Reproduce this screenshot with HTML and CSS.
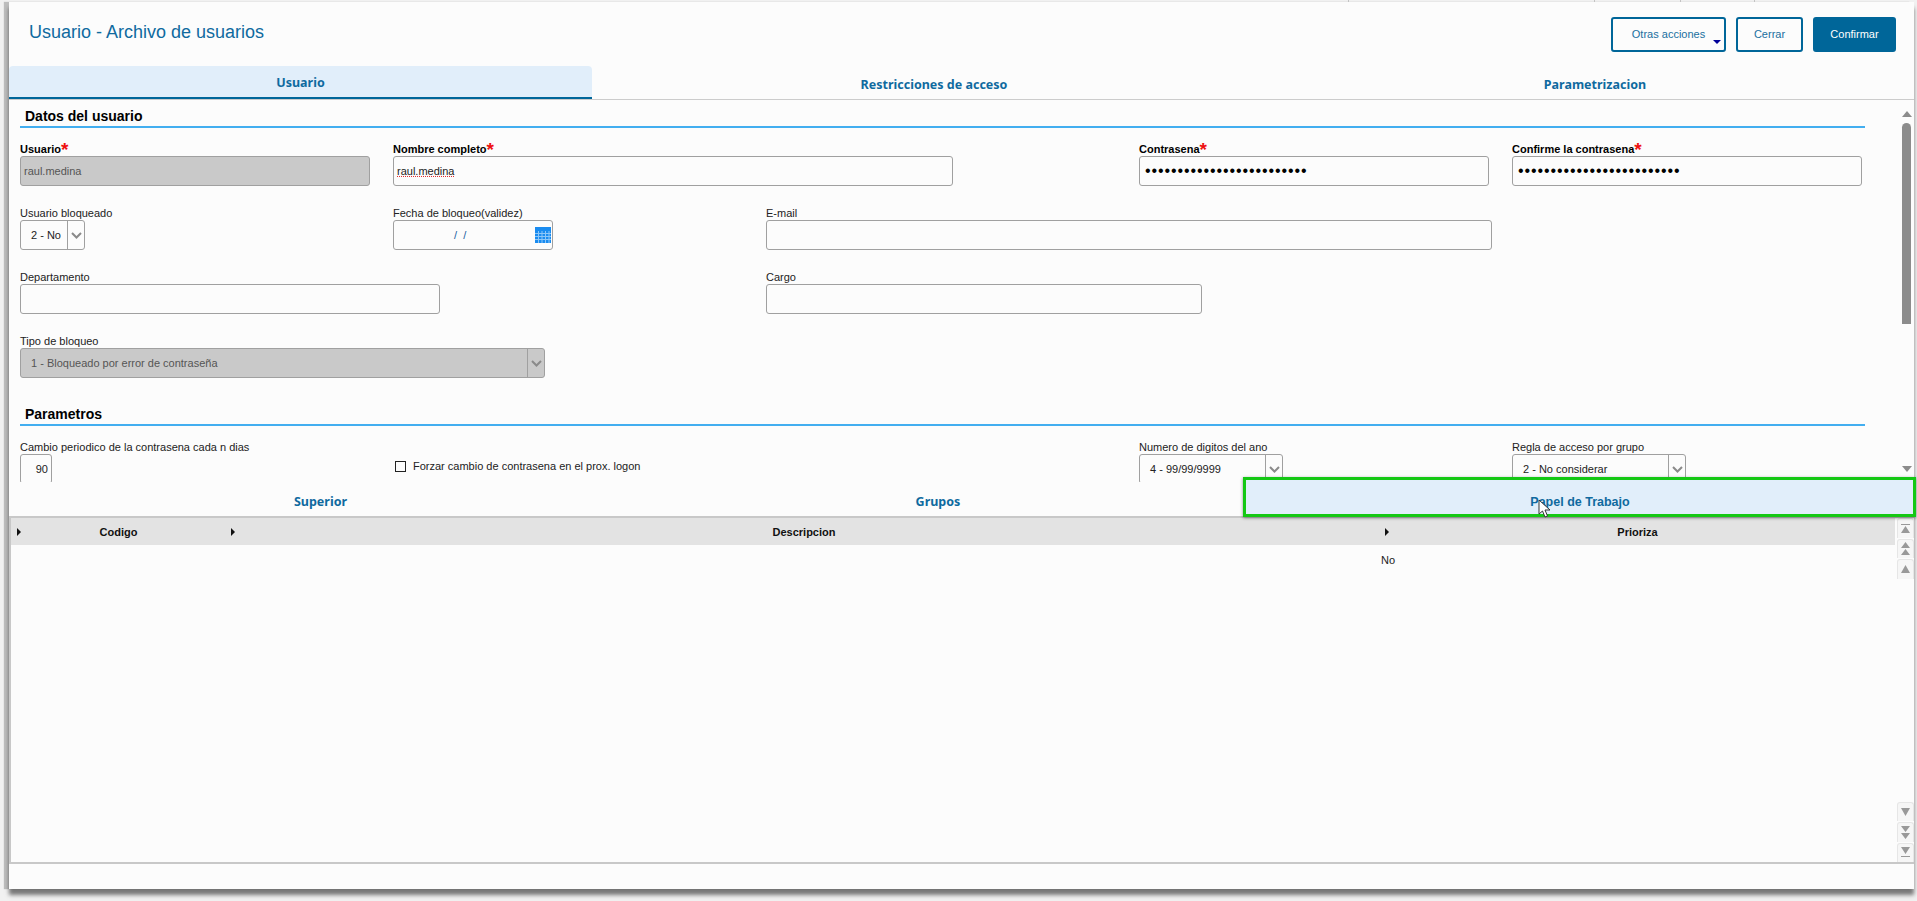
FILE: index.html
```html
<!DOCTYPE html>
<html lang="en">
<head>
    <meta charset="UTF-8">
    <title>Usuario - Archivo de usuarios</title>
    <link rel="stylesheet" href="styles.css">
</head>
<body>

<div class="window">
    <header class="window-header">
        <h1>Usuario - Archivo de usuarios</h1>
        <div class="actions">
            <button type="button" class="btn btn-more">Otras acciones<span class="caret"></span></button>
            <button type="button" class="btn btn-close">Cerrar</button>
            <button type="button" class="btn btn-primary">Confirmar</button>
        </div>
    </header>

    <nav class="tabs top-tabs">
        <div class="tab active">Usuario</div>
        <div class="tab">Restricciones de acceso</div>
        <div class="tab">Parametrizacion</div>
    </nav>

    <div class="form-pane">
        <div class="form-scroll">
            <h3 class="section-title">Datos del usuario</h3>
            <div class="field-grid">
                <div class="form-group">
                    <label class="required">Usuario<span class="star">*</span></label>
                    <input class="w-350 disabled" type="text" value="raul.medina" disabled>
                </div>
                <div class="form-group span-2">
                    <label class="required">Nombre completo<span class="star">*</span></label>
                    <input class="w-560 misspelled" type="text" value="raul.medina">
                </div>
                <div class="form-group">
                    <label class="required">Contrasena<span class="star">*</span></label>
                    <input class="w-350 secret" type="password" value="1234567890123456789012345">
                </div>
                <div class="form-group">
                    <label class="required">Confirme la contrasena<span class="star">*</span></label>
                    <input class="w-350 secret" type="password" value="1234567890123456789012345">
                </div>

                <div class="form-group">
                    <label>Usuario bloqueado</label>
                    <div class="select w-65"><span>2 - No</span><i class="chevron"><svg width="11" height="7" viewBox="0 0 11 7"><path d="M1 1l4.5 4.5L10 1" fill="none" stroke="#8a8a8a" stroke-width="2"/></svg></i></div>
                </div>
                <div class="form-group">
                    <label>Fecha de bloqueo(validez)</label>
                    <div class="date-input w-160">
                        <span class="date-mask">/ &nbsp;/</span>
                        <svg class="calendar" width="16" height="16" viewBox="0 0 16 16">
                            <rect width="16" height="16" fill="#1a8cf0"/>
                            <path d="M3.5 4v12M7 4v12M10.5 4v12M14 4v12M0 6.5h16M0 9.5h16M0 12.5h16" stroke="#8cc6f8" stroke-width="1"/>
                        </svg>
                    </div>
                </div>
                <div class="form-group span-3">
                    <label>E-mail</label>
                    <input class="w-726" type="text">
                </div>

                <div class="form-group span-2">
                    <label>Departamento</label>
                    <input class="w-420" type="text">
                </div>
                <div class="form-group span-3">
                    <label>Cargo</label>
                    <input class="w-436" type="text">
                </div>

                <div class="form-group span-5">
                    <label>Tipo de bloqueo</label>
                    <div class="select disabled w-525"><span>1 - Bloqueado por error de contraseña</span><i class="chevron"><svg width="11" height="7" viewBox="0 0 11 7"><path d="M1 1l4.5 4.5L10 1" fill="none" stroke="#8a8a8a" stroke-width="2"/></svg></i></div>
                </div>
            </div>

            <h3 class="section-title second">Parametros</h3>
            <div class="field-grid">
                <div class="form-group">
                    <label>Cambio periodico de la contrasena cada n dias</label>
                    <input class="w-32 number" type="text" value="90">
                </div>
                <div class="check-group span-2">
                    <span class="checkbox"></span>
                    <span>Forzar cambio de contrasena en el prox. logon</span>
                </div>
                <div class="form-group">
                    <label>Numero de digitos del ano</label>
                    <div class="select w-144"><span>4 - 99/99/9999</span><i class="chevron"><svg width="11" height="7" viewBox="0 0 11 7"><path d="M1 1l4.5 4.5L10 1" fill="none" stroke="#8a8a8a" stroke-width="2"/></svg></i></div>
                </div>
                <div class="form-group">
                    <label>Regla de acceso por grupo</label>
                    <div class="select w-174"><span>2 - No considerar</span><i class="chevron"><svg width="11" height="7" viewBox="0 0 11 7"><path d="M1 1l4.5 4.5L10 1" fill="none" stroke="#8a8a8a" stroke-width="2"/></svg></i></div>
                </div>
            </div>
        </div>
        <div class="scrollbar">
            <span class="arrow-up"></span>
            <span class="thumb"></span>
            <span class="arrow-down"></span>
        </div>
    </div>

    <nav class="tabs bottom-tabs">
        <div class="tab">Superior</div>
        <div class="tab">Grupos</div>
        <div class="tab highlighted">
            <div class="highlight-box"></div>
            <span>Papel de Trabajo</span>
            <svg class="cursor" width="13" height="19" viewBox="0 0 13 19">
                <path d="M1 1v14l3.5-3 2.5 6 2.5-1-2.5-6H12z" fill="#fff" stroke="#333" stroke-width="1"/>
            </svg>
        </div>
    </nav>

    <div class="table-pane">
        <div class="table">
            <div class="table-row table-head">
                <div class="cell"><i class="sort"></i><span>Codigo</span></div>
                <div class="cell"><i class="sort"></i><span>Descripcion</span></div>
                <div class="cell"><i class="sort"></i><span>Prioriza</span></div>
            </div>
            <div class="table-row table-body">
                <div></div>
                <div></div>
                <div class="plain-cell">No</div>
            </div>
        </div>
        <div class="pager">
            <div class="pager-stack">
                <button type="button" class="pager-btn"><svg width="11" height="11" viewBox="0 0 11 11"><path d="M1 1h9v1H1zM5.500 3L10 10H1z" fill="#999"/></svg></button>
                <button type="button" class="pager-btn"><svg width="11" height="13" viewBox="0 0 11 13"><path d="M5.500 0L10 6H1zM5.500 7l4.500 6H1z" fill="#999"/></svg></button>
                <button type="button" class="pager-btn"><svg width="11" height="8" viewBox="0 0 11 8"><path d="M5.500 0L10 8H1z" fill="#999"/></svg></button>
            </div>
            <div class="pager-stack">
                <button type="button" class="pager-btn"><svg width="11" height="8" viewBox="0 0 11 8"><path d="M1 0h9L5.500 8z" fill="#999"/></svg></button>
                <button type="button" class="pager-btn"><svg width="11" height="13" viewBox="0 0 11 13"><path d="M1 0h9L5.500 6zM1 7h9l-4.500 6z" fill="#999"/></svg></button>
                <button type="button" class="pager-btn"><svg width="11" height="11" viewBox="0 0 11 11"><path d="M1 0h9L5.500 7zM1 9h9v1H1z" fill="#999"/></svg></button>
            </div>
        </div>
    </div>

    <footer class="window-footer"></footer>
</div>

</body>
</html>
```

FILE: styles.css
```css
* {
    box-sizing: border-box;
    margin: 0;
    padding: 0;
    font-family: "Liberation Sans", Arial, sans-serif;
}

html, body {
    height: 100%;
    overflow: hidden;
}

body {
    background-color: #f1f1f1;
    color: #222;
    font-size: 11px;
    /* edges of the window behind this one */
    background-image: linear-gradient(#c4c4c4, #c4c4c4), linear-gradient(#c4c4c4, #c4c4c4), linear-gradient(#c4c4c4, #c4c4c4), linear-gradient(#c4c4c4, #c4c4c4);
    background-size: 1px 2px;
    background-repeat: no-repeat;
    background-position: 1348px 0, 1594px 0, 1680px 0, 1754px 0;
}

.window {
    display: flex;
    flex-direction: column;
    width: 1905px;
    height: 887px;
    margin: 2px 0 0 9px;
    background-color: #fcfcfc;
    box-shadow: 0 6px 4px rgba(0, 0, 0, 0.5), -5px 0 1px #bdbdbd;
}

/* header */
.window-header {
    display: flex;
    justify-content: space-between;
    align-items: center;
    height: 64px;
    padding: 0 18px 0 20px;
}

.window-header h1 {
    font-size: 18px;
    font-weight: normal;
    color: #0f6a9f;
    margin-bottom: 4px;
}

.actions {
    display: flex;
    gap: 10px;
}

.btn {
    height: 35px;
    border: 2px solid #006699;
    border-radius: 3px;
    background-color: #fcfcfc;
    color: #1a6f9f;
    font-size: 11px;
}

.btn-more {
    position: relative;
    width: 115px;
}

.btn-close {
    width: 67px;
}

.btn-primary {
    width: 83px;
    background-color: #006699;
    color: #fff;
}

.caret {
    position: absolute;
    right: 3px;
    bottom: 6px;
    border-left: 4px solid transparent;
    border-right: 4px solid transparent;
    border-top: 4px solid #000099;
}

/* tabs */
.tabs {
    display: grid;
    flex-shrink: 0;
}

.tab {
    display: flex;
    justify-content: center;
    align-items: center;
    font-family: "Noto Sans", Arial, sans-serif;
    font-size: 12.5px;
    font-weight: 700;
    color: #0f6a9f;
}

.top-tabs {
    grid-template-columns: 583px 684px 1fr;
    height: 34px;
    border-bottom: 1px solid #cccccc;
}

.top-tabs .tab {
    padding-top: 3px;
}

.top-tabs .active {
    height: 33px;
    padding-top: 2px;
    background-color: #e1eefa;
    border-bottom: 2px solid #006699;
    border-radius: 4px 4px 0 0;
}

.bottom-tabs {
    grid-template-columns: 619px 616px 1fr;
    height: 36px;
    padding-left: 2px;
    border-bottom: 2px solid #c8c8c8;
}

.bottom-tabs .tab {
    padding-top: 5px;
}

.highlighted {
    position: relative;
}

.highlight-box {
    position: absolute;
    left: -3px;
    right: -2px;
    top: -5px;
    bottom: -1px;
    background-color: #e1eefa;
    border: 3px solid #14c814;
    box-shadow: 0 1px 3px rgba(0, 0, 0, 0.45);
}

.highlighted span {
    position: relative;
}

.cursor {
    position: absolute;
    left: 292px;
    top: 17px;
}

/* form */
.form-pane {
    display: flex;
    height: 382px;
    overflow: hidden;
    flex-shrink: 0;
}

.form-scroll {
    flex: 1;
    padding-left: 11px;
}

.section-title {
    height: 28px;
    margin-right: 35px;
    padding: 6px 0 0 5px;
    border-bottom: 2px solid #42aef0;
    font-size: 14px;
    line-height: 20px;
    color: #000;
}

.section-title.second {
    margin-top: 20px;
}

.field-grid {
    display: grid;
    grid-template-columns: repeat(5, 373px);
    row-gap: 17px;
    margin-top: 11px;
}

.form-group label {
    display: block;
    height: 17px;
    line-height: 21px;
    color: #222;
    white-space: nowrap;
}

.form-group label.required {
    font-weight: bold;
    color: #000;
}

.star {
    color: #ee1111;
    font-size: 19px;
    line-height: 12px;
    vertical-align: -3px;
}

.span-2 { grid-column: span 2; }
.span-3 { grid-column: span 3; }
.span-5 { grid-column: span 5; }

.w-32 { width: 32px; }
.w-65 { width: 65px; }
.w-144 { width: 144px; }
.w-160 { width: 160px; }
.w-174 { width: 174px; }
.w-350 { width: 350px; }
.w-420 { width: 420px; }
.w-436 { width: 436px; }
.w-525 { width: 525px; }
.w-560 { width: 560px; }
.w-726 { width: 726px; }

input, .select, .date-input {
    display: flex;
    align-items: center;
    height: 30px;
    border: 1px solid #a0a0a0;
    border-radius: 3px;
    background-color: #fcfcfc;
    font-size: 11px;
    color: #222;
}

input {
    padding: 0 3px;
    outline: none;
}

input.disabled {
    background-color: #c9c9c9;
    color: #555;
}

input.misspelled {
    text-decoration: underline dotted #e03030;
}

input.secret {
    padding: 0 5px;
    font-size: 16px;
    letter-spacing: 0.9px;
    color: #000;
}

input.number {
    text-align: right;
}

.select > span {
    flex: 1;
    padding-left: 10px;
    white-space: nowrap;
}

.select.disabled {
    background-color: #c9c9c9;
    color: #555;
}

.chevron {
    display: flex;
    justify-content: center;
    align-items: center;
    align-self: stretch;
    width: 17px;
    flex-shrink: 0;
    border-left: 1px solid #a0a0a0;
}

.date-input {
    justify-content: space-between;
    padding: 0 1px 0 60px;
}

.date-mask {
    color: #1a5f9f;
}

.check-group {
    display: flex;
    align-items: center;
    gap: 7px;
    padding: 11px 0 0 2px;
    height: 47px;
}

.checkbox {
    width: 11px;
    height: 11px;
    border: 1px solid #222;
    background-color: #fcfcfc;
}

/* scrollbar */
.scrollbar {
    display: flex;
    flex-direction: column;
    align-items: center;
    width: 13px;
    margin-right: 1px;
    padding: 11px 0 10px;
}

.arrow-up, .arrow-down {
    border-left: 5px solid transparent;
    border-right: 5px solid transparent;
}

.arrow-up {
    border-bottom: 6px solid #8c8c8c;
}

.arrow-down {
    margin-top: auto;
    border-top: 6px solid #8c8c8c;
}

.thumb {
    width: 9px;
    height: 201px;
    margin-top: 6px;
    background-color: #8c8c8c;
    border-radius: 5px 5px 0 0;
}

/* table */
.table-pane {
    display: flex;
    flex: 1;
    min-height: 0;
    margin-left: 2px;
    box-shadow: -2px 0 0 #c8c8c8;
}

.table {
    flex: 1;
}

.table-row {
    display: grid;
    grid-template-columns: 217px 1154px 1fr;
}

.table-head {
    height: 27px;
    background-color: #e3e3e3;
    color: #111;
    font-weight: bold;
}

.cell {
    display: grid;
    grid-template-columns: 1fr auto 1fr;
    align-items: center;
    padding-left: 6px;
    padding-right: 8px;
}

.cell + .cell {
    padding-left: 3px;
    padding-right: 5px;
}

.cell span {
    grid-column: 2;
    grid-row: 1;
}

.sort {
    grid-column: 1;
    grid-row: 1;
    width: 0;
    height: 0;
    border-top: 4px solid transparent;
    border-bottom: 4px solid transparent;
    border-left: 4px solid #111;
}

.table-body {
    height: 30px;
    align-items: center;
}

.plain-cell {
    margin-left: -1px;
}

.pager {
    display: flex;
    flex-direction: column;
    justify-content: space-between;
    width: 19px;
    padding-left: 2px;
}

.pager-stack {
    display: flex;
    flex-direction: column;
    gap: 1px;
}

.pager-btn {
    display: flex;
    justify-content: center;
    align-items: center;
    width: 17px;
    height: 19.5px;
    border: 1px solid #e6e6e6;
    border-bottom: none;
    border-radius: 3px 3px 0 0;
    background-color: #f6f6f6;
}

.window-footer {
    flex-shrink: 0;
    height: 27px;
    border-top: 2px solid #c8c8c8;
}
```
